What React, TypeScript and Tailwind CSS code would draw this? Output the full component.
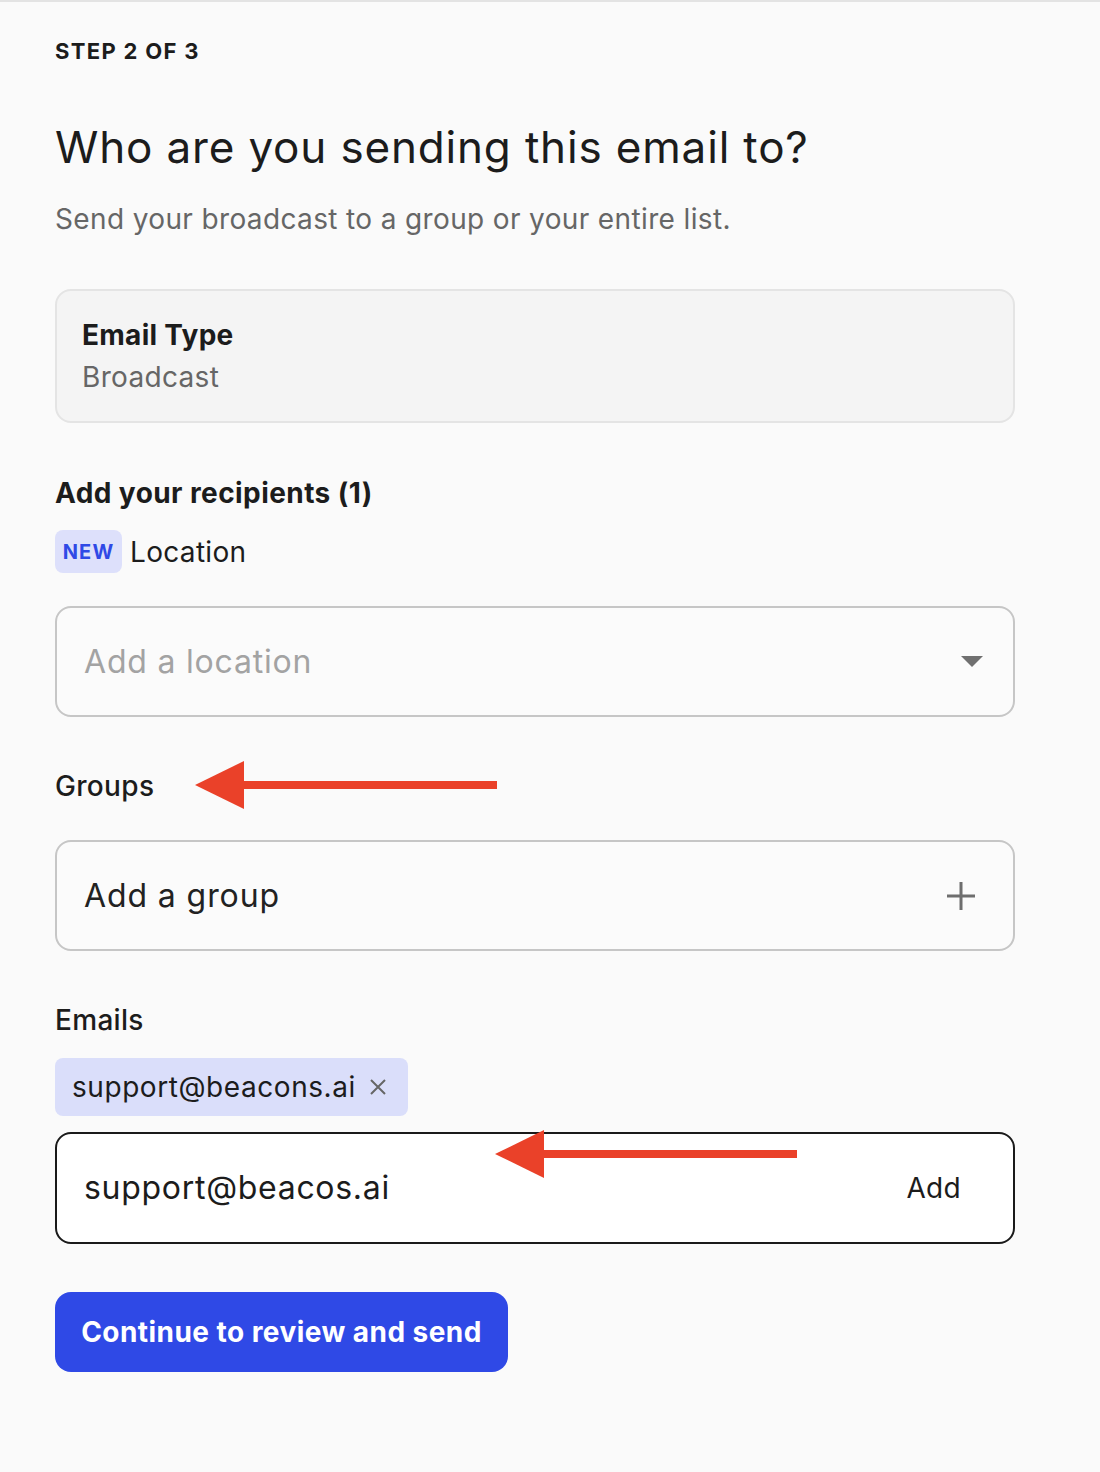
const FONT = { fontFamily: "Inter, 'Noto Sans', sans-serif" };

function Arrow({ className }: { className: string }) {
  return (
    <svg className={className} width="302" height="52" viewBox="0 0 302 52" fill="none">
      <polygon points="0,26 49,2 49,50" fill="#EA4129" />
      <rect x="46" y="22" width="256" height="8" fill="#EA4129" />
    </svg>
  );
}

export default function App() {
  return (
    <div
      className="relative min-h-screen border-t-2 border-[#e3e3e3] bg-[#fafafa] text-[#1c1c1c]"
      style={FONT}
    >
      <div className="w-[1015px] pl-[55px] pt-[34px] pb-[100px] tracking-[0.02em]">
        <div className="text-[22px] leading-[30px] font-bold tracking-[0.06em]">STEP 2 OF 3</div>

        <h1 className="mt-[53px] text-[44px] leading-[56px] font-normal tracking-[0.019em]">
          Who are you sending this email to?
        </h1>
        <p className="mt-[26px] text-[28px] leading-[36px] text-[#666] tracking-[0.013em]">
          Send your broadcast to a group or your entire list.
        </p>

        {/* Email type card */}
        <div className="mt-[52px] rounded-[16px] border-2 border-[#e4e4e4] bg-[#f4f4f4] px-[25px] py-[23px]">
          <div className="text-[28px] leading-[42px] font-bold tracking-[0.01em]">Email Type</div>
          <div className="text-[28px] leading-[42px] text-[#666]">Broadcast</div>
        </div>

        <div className="mt-[50px] text-[28px] leading-[40px] font-bold tracking-[0.015em]">
          Add your recipients (1)
        </div>

        <div className="mt-[17px] flex items-center gap-[8px]">
          <span className="flex h-[43px] w-[67px] items-center justify-center rounded-[8px] bg-[#dde0fb] text-[20px] font-bold tracking-[0.06em] text-[#2f49e6]">
            NEW
          </span>
          <span className="text-[28px] leading-[40px]">Location</span>
        </div>

        {/* Location select */}
        <div className="mt-[33px] flex h-[111px] items-center justify-between rounded-[16px] border-2 border-[#c6c6c6] bg-[#fbfbfb] pl-[27px] pr-[30px]">
          <span className="text-[32px] text-[#a3a3a3] tracking-[0.025em]">Add a location</span>
          <svg width="22" height="12" viewBox="0 0 22 12">
            <polygon points="0,0 22,0 11,11" fill="#707070" />
          </svg>
        </div>

        <div className="mt-[49px] text-[28px] leading-[40px] font-medium">Groups</div>

        {/* Group picker */}
        <div className="mt-[34px] flex h-[111px] items-center justify-between rounded-[16px] border-2 border-[#c6c6c6] bg-[#fbfbfb] pl-[27px] pr-[38px]">
          <span className="text-[32px] text-[#222] tracking-[0.028em]">Add a group</span>
          <svg width="28" height="28" viewBox="0 0 28 28">
            <path d="M14 0v28M0 14h28" stroke="#6e6e6e" strokeWidth="3" />
          </svg>
        </div>

        <div className="mt-[49px] text-[28px] leading-[40px] font-medium">Emails</div>

        <div className="mt-[18px] inline-flex h-[58px] items-center gap-[14px] rounded-[8px] bg-[#dadefa] pl-[17px] pr-[22px]">
          <span className="text-[28px] tracking-[0.02em]">support@beacons.ai</span>
          <svg width="16" height="16" viewBox="0 0 16 16">
            <path d="M1 1l14 14M15 1L1 15" stroke="#666" strokeWidth="2" />
          </svg>
        </div>

        {/* Email input */}
        <div className="mt-[16px] flex h-[112px] items-center justify-between rounded-[16px] border-2 border-[#1a1a1a] bg-white pl-[27px] pr-[52px]">
          <span className="text-[32px] tracking-[0.022em]">support@beacos.ai</span>
          <span className="text-[28px]">Add</span>
        </div>

        <button className="mt-[48px] flex h-[80px] w-[453px] items-center justify-center rounded-[16px] bg-[#2f49e6] text-[28px] font-bold text-white tracking-[0.016em]">
          Continue to review and send
        </button>
      </div>

      {/* annotation arrows */}
      <Arrow className="absolute left-[195px] top-[757px]" />
      <Arrow className="absolute left-[495px] top-[1126px]" />
    </div>
  );
}
